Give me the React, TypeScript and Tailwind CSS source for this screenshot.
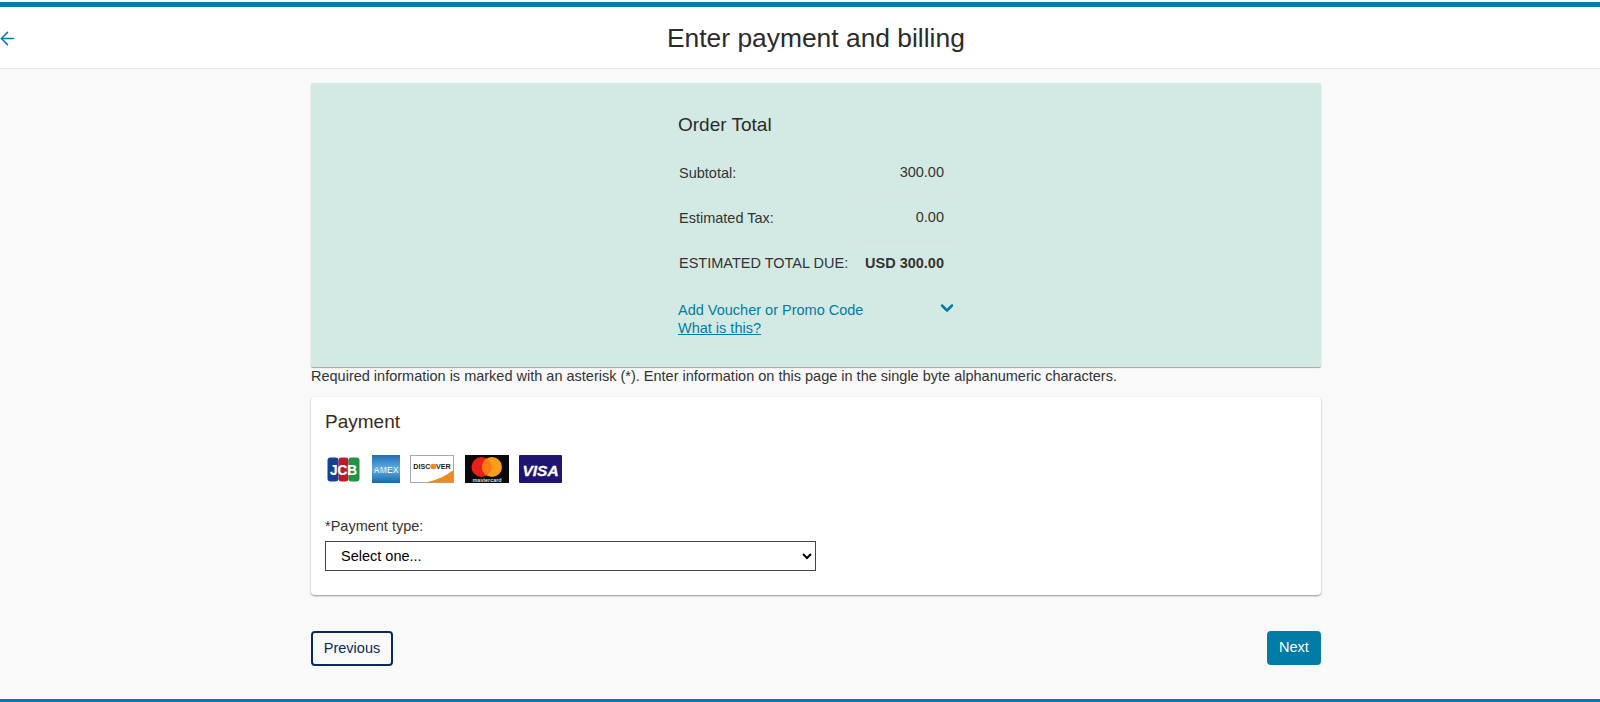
import React from 'react';
import { ArrowLeft, ChevronDown } from 'lucide-react';

const JcbLogo = () => (
  <svg width="33" height="25" viewBox="0 0 33 25">
    <rect x="0.5" y="0.5" width="11" height="24" rx="3" fill="#17408f" />
    <rect x="11.5" y="0.5" width="10" height="24" rx="3" fill="#b81c2e" />
    <rect x="21.5" y="0.5" width="11" height="24" rx="3" fill="#1f9445" />
    <text x="16.5" y="17.5" textAnchor="middle" fontFamily="Liberation Sans" fontSize="14" fontWeight="700" fill="#fff" stroke="#fff" strokeWidth="0.2" textLength="27" lengthAdjust="spacingAndGlyphs">JCB</text>
  </svg>
);

const AmexLogo = () => (
  <svg width="28" height="28" viewBox="0 0 28 28">
    <defs>
      <linearGradient id="amexBg" x1="0" y1="0" x2="0" y2="1">
        <stop offset="0" stopColor="#1f6db8" />
        <stop offset="0.5" stopColor="#62aee0" />
        <stop offset="1" stopColor="#1668ae" />
      </linearGradient>
    </defs>
    <rect width="28" height="28" fill="url(#amexBg)" />
    <text x="14" y="17.5" textAnchor="middle" fontFamily="Liberation Sans" fontSize="8.6" fontWeight="700" fill="#fff" stroke="#1668ae" strokeWidth="0.2">AMEX</text>
  </svg>
);

const DiscoverLogo = () => (
  <svg width="44" height="28" viewBox="0 0 44 28">
    <rect x="0.5" y="0.5" width="43" height="27" fill="#fff" stroke="#aaa" />
    <path d="M15 27.5 C28 25 37 20 43.5 15 V27.5 Z" fill="#ef8a22" />
    <text x="22" y="14" textAnchor="middle" fontFamily="Liberation Sans" fontSize="7.2" fontWeight="700" fill="#222">DISCOVER</text>
    <circle cx="23.5" cy="11.5" r="2.8" fill="#ef8a22" />
  </svg>
);

const MastercardLogo = () => (
  <svg width="44" height="28" viewBox="0 0 44 28">
    <rect width="44" height="28" fill="#0a0a0a" />
    <circle cx="16.5" cy="12" r="10" fill="#e8201a" />
    <circle cx="27" cy="12" r="10" fill="#f79e1b" />
    <path d="M21.75 3.5 a10 10 0 0 1 0 17 a10 10 0 0 1 0 -17 Z" fill="#ff7a12" />
    <text x="22" y="26.5" textAnchor="middle" fontFamily="Liberation Sans" fontSize="5.4" fontWeight="700" fill="#ddd">mastercard</text>
  </svg>
);

const VisaLogo = () => (
  <svg width="43" height="28" viewBox="0 0 43 28">
    <rect x="0" y="0" width="43" height="28" rx="1" fill="#1f1470" />
    <text x="21.5" y="20.5" textAnchor="middle" fontFamily="Liberation Sans" fontSize="15.5" fontWeight="700" fontStyle="italic" fill="#fff" stroke="#fff" strokeWidth="0.3">VISA</text>
  </svg>
);

const TotalRow = ({ label, value, bold, line }: { label: string; value: string; bold?: boolean; line?: boolean }) => (
  <div className="flex h-[45px]">
    <div className="flex-1 pl-[1px] flex items-center whitespace-nowrap">{label}</div>
    <div className={`w-[96px] pr-[10px] flex items-center justify-end whitespace-nowrap ${line ? 'border-b border-[#dee0e0]' : ''} ${bold ? 'font-bold' : ''}`}>
      {value}
    </div>
  </div>
);

export default function App() {
  return (
    <div className="h-[702px] overflow-hidden bg-[#f9f9f9] text-[14.5px] text-[#333] font-['Liberation_Sans',Arial,sans-serif] flex flex-col">
      <header className="mt-[2px] h-[67px] shrink-0 border-t-[5px] border-b border-t-[#007ca6] border-b-[#e4e4e4] bg-white flex items-center">
        <ArrowLeft size={21} strokeWidth={1.7} className="-ml-[3px] mt-[1px] text-[#007ca6]" />
        <h1 className="ml-[649px] mt-[2px] text-[26.4px] leading-none text-[#2b2b2b] whitespace-nowrap">Enter payment and billing</h1>
      </header>

      <main className="ml-[311px] w-[1010px] flex-1 flex flex-col">
        <section className="mt-[14px] h-[284px] bg-[#d3eae4] rounded-[2px] shadow-[0_1px_1px_rgba(0,0,0,0.35)] flex justify-center">
          <div className="w-[276px]">
            <h2 className="mt-[31px] mb-[16px] text-[19px] leading-[21px] text-[#2b2b2b]">Order Total</h2>
            <TotalRow label="Subtotal:" value="300.00" line />
            <TotalRow label="Estimated Tax:" value="0.00" line />
            <TotalRow label="ESTIMATED TOTAL DUE:" value="USD 300.00" bold />
            <div className="mt-[15px] flex justify-between text-[#007ca6]">
              <div className="leading-[18px]">
                <div>Add Voucher or Promo Code</div>
                <a className="underline" href="#">What is this?</a>
              </div>
              <ChevronDown size={20} strokeWidth={3} className="-mt-[3px] -mr-[3px]" />
            </div>
          </div>
        </section>

        <p className="h-[30px] leading-[18px] whitespace-nowrap">
          Required information is marked with an asterisk (*). Enter information on this page in the single byte alphanumeric characters.
        </p>

        <section className="h-[198px] bg-white rounded-[4px] shadow-[0_1px_2px_rgba(0,0,0,0.4)] px-[14px] pt-[15px]">
          <h2 className="text-[19px] leading-[20px] text-[#3a2a20]">Payment</h2>
          <div className="mt-[23px] flex items-center h-[28px]">
            <div className="ml-[2px]"><JcbLogo /></div>
            <div className="ml-[12px]"><AmexLogo /></div>
            <div className="ml-[10px]"><DiscoverLogo /></div>
            <div className="ml-[11px]"><MastercardLogo /></div>
            <div className="ml-[10px]"><VisaLogo /></div>
          </div>
          <label className="block mt-[34px] leading-[18px]">*Payment type:</label>
          <select className="mt-[6px] block w-[491px] h-[30px] border border-[#444] bg-white pl-[11px] text-black">
            <option>Select one...</option>
          </select>
        </section>

        <div className="mt-[36px] flex justify-between items-start">
          <button className="w-[82px] h-[35px] rounded-[4px] border-2 border-[#0b2a5b] text-[#0b2a5b]">Previous</button>
          <button className="w-[54px] h-[34px] rounded-[4px] bg-[#007ca6] text-white">Next</button>
        </div>
      </main>

      <div className="h-[3px] shrink-0 bg-[#007ca6]" />
    </div>
  );
}
